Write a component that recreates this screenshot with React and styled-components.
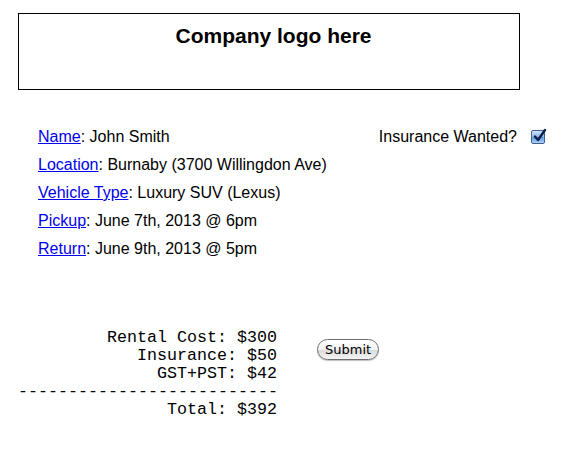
import React from "react";
import styled, { createGlobalStyle } from "styled-components";

const GlobalStyle = createGlobalStyle`
  html, body {
    margin: 0;
    padding: 0;
    background: #fff;
  }
  body {
    font-family: "Liberation Sans", Arial, Helvetica, sans-serif;
    color: #000;
  }
`;

const Page = styled.div`
  width: 573px;
  padding: 13px 0 0 18px;
  box-sizing: border-box;
`;

const LogoBox = styled.div`
  width: 502px;
  height: 77px;
  box-sizing: border-box;
  border: 1px solid #000;
  padding: 10px 0 0 9px;
  text-align: center;
`;

const LogoText = styled.h1`
  margin: 0;
  font-size: 21px;
  line-height: 24px;
  font-weight: bold;
`;

const Details = styled.div`
  display: flex;
  justify-content: space-between;
  align-items: flex-start;
  margin-top: 33px;
  padding-left: 20px;
  width: 527px;
  box-sizing: border-box;
`;

const List = styled.div`
  display: flex;
  flex-direction: column;
`;

const Row = styled.div`
  height: 28px;
  font-size: 16px;
  line-height: 28px;
  white-space: nowrap;
`;

const FieldLink = styled.a`
  color: #0000ee;
  text-decoration: underline;
`;

const Insurance = styled.label`
  display: flex;
  align-items: center;
  height: 28px;
  font-size: 16px;
  line-height: 28px;
  gap: 14px;
`;

const CheckBox = styled.span`
  display: inline-flex;
  width: 14px;
  height: 14px;
  margin-top: -1px;
  box-sizing: border-box;
  border: 1px solid #3f5f8f;
  border-radius: 2px;
  background: linear-gradient(#cfe3fb 0%, #8fbbee 45%, #5d9be3 55%, #a9d0f8 100%);
  box-shadow: inset 0 0 1px rgba(255, 255, 255, 0.8);
  position: relative;
  svg {
    position: absolute;
    left: 1px;
    top: -3px;
  }
`;

const Summary = styled.div`
  display: flex;
  align-items: flex-start;
  margin-top: 66px;
`;

const Totals = styled.div`
  width: 259px;
  font-family: "Liberation Mono", "Courier New", monospace;
  font-size: 16.67px;
  line-height: 18px;
  text-align: right;
  white-space: pre;
`;

const SubmitButton = styled.button`
  margin: 10px 0 0 40px;
  height: 21px;
  padding: 0 7px;
  font-family: "DejaVu Sans", "Lucida Grande", sans-serif;
  font-size: 13px;
  line-height: 19px;
  color: #000;
  border: 1px solid #6e6e6e;
  border-radius: 11px;
  background: linear-gradient(#ffffff 0%, #f2f2f2 50%, #dcdcdc 55%, #f4f4f4 100%);
  box-shadow: 0 1px 1px rgba(0, 0, 0, 0.25);
  cursor: pointer;
`;

const fields = [
  { label: "Name", value: "John Smith" },
  { label: "Location", value: "Burnaby (3700 Willingdon Ave)" },
  { label: "Vehicle Type", value: "Luxury SUV (Lexus)" },
  { label: "Pickup", value: "June 7th, 2013 @ 6pm" },
  { label: "Return", value: "June 9th, 2013 @ 5pm" },
];

const totals = [
  "Rental Cost: $300",
  "Insurance: $50",
  "GST+PST: $42",
  "--------------------------",
  "Total: $392",
];

export default function App() {
  return (
    <>
      <GlobalStyle />
      <Page>
        <LogoBox>
          <LogoText>Company logo here</LogoText>
        </LogoBox>

        <Details>
          <List>
            {fields.map((f) => (
              <Row key={f.label}>
                <FieldLink href="#">{f.label}</FieldLink>: {f.value}
              </Row>
            ))}
          </List>
          <Insurance>
            Insurance Wanted?
            <CheckBox>
              <svg width="14" height="15" viewBox="0 0 14 15">
                <path
                  d="M2 8.5 L5 12 L12 2"
                  fill="none"
                  stroke="#0f1f46"
                  strokeWidth="2.4"
                  strokeLinecap="round"
                  strokeLinejoin="round"
                />
              </svg>
            </CheckBox>
          </Insurance>
        </Details>

        <Summary>
          <Totals>
            {totals.map((t, i) => (
              <div key={i}>{t}</div>
            ))}
          </Totals>
          <SubmitButton>Submit</SubmitButton>
        </Summary>
      </Page>
    </>
  );
}
